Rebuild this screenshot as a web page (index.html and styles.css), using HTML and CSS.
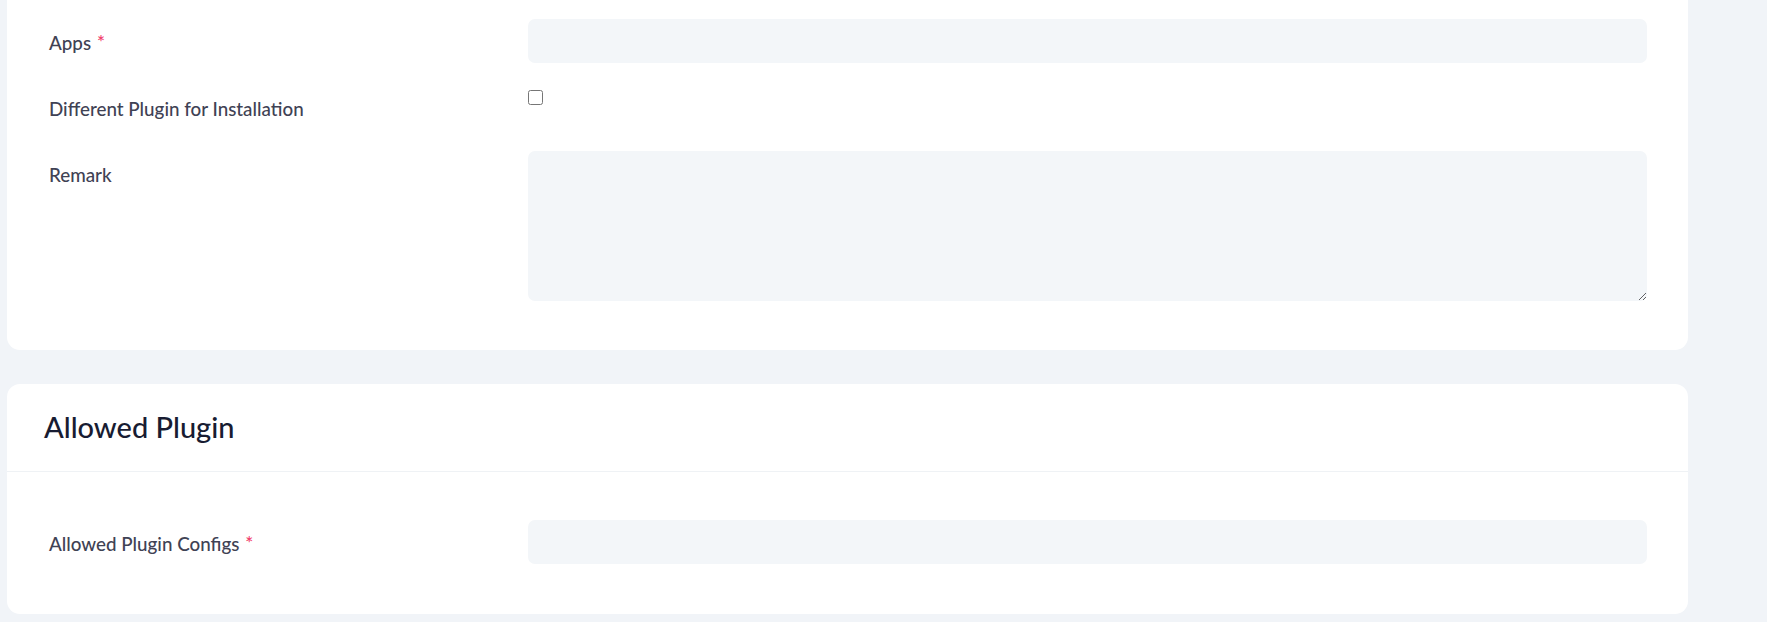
FILE: index.html
```html
<!DOCTYPE html>
<html>
<head>
	<meta charset="utf-8">
	<title>Plugin Settings</title>
	<link rel="stylesheet" href="styles.css">
</head>
<body>
	<!-- page is scrolled, so the first card's top is out of view -->
	<div class="content">
		<div class="card card-first">
			<div class="card-body">
				<div class="row">
					<label class="label required">Apps</label>
					<div class="field"><input type="text" class="input"></div>
				</div>
				<div class="row">
					<label class="label">Different Plugin for Installation</label>
					<div class="field"><input type="checkbox" class="check"></div>
				</div>
				<div class="row">
					<label class="label">Remark</label>
					<div class="field"><textarea class="input area"></textarea></div>
				</div>
			</div>
		</div>

		<div class="card">
			<div class="card-header">
				<h3 class="card-title">Allowed Plugin</h3>
			</div>
			<div class="card-body card-last">
				<div class="row">
					<label class="label required">Allowed Plugin Configs</label>
					<div class="field"><input type="text" class="input"></div>
				</div>
			</div>
		</div>
	</div>
</body>
</html>
```

FILE: styles.css
```css
/*先去掉默认边距*/
body,div,h3{margin: 0;padding: 0;}
body{
	background: #f1f4f8;
	font-family: Lato, "Open Sans", Arial, sans-serif;
	color: #3f4254;
}
.content{
	width: 1681px;
	margin: -21px 0 0 7px;
}
.card{
	background: #fff;
	border-radius: 13px;
	margin-bottom: 34px;
}
.card-first .card-body{padding-top: 40px;}
.card-header{
	padding: 26px 37px 27px;
	border-bottom: 1px solid #eff2f5;
}
.card-title{
	font-size: 29px;
	line-height: 34px;
	font-weight: 500;
	color: #181c32;
}
.card-body{padding: 48px 41px 49px 42px;}
.card-body.card-last{padding-bottom: 50px;}
.row{
	display: grid;
	grid-template-columns: 30% 70%;
	min-height: 44px;
	margin-bottom: 22px;
}
.row:last-child{margin-bottom: 0;}
.label{
	padding-top: 12px;
	font-size: 18.8px;
	line-height: 24px;
	font-weight: 500;
	color: #3f4254;
}
/*必填的红色星号*/
.required:after{
	content: "*";
	color: #f1416c;
	margin-left: 6px;
	font-size: 19px;
	vertical-align: top;
	position: relative;
	top: -1px;
}
.input{
	display: block;
	box-sizing: border-box;
	width: 100%;
	height: 44px;
	border: 0;
	border-radius: 7px;
	background: #f3f6f9;
	outline: none;
}
.area{
	height: 150px;
	resize: vertical;
}
.check{
	width: 15px;
	height: 15px;
	margin: 5px 0 0 0;
}
```
